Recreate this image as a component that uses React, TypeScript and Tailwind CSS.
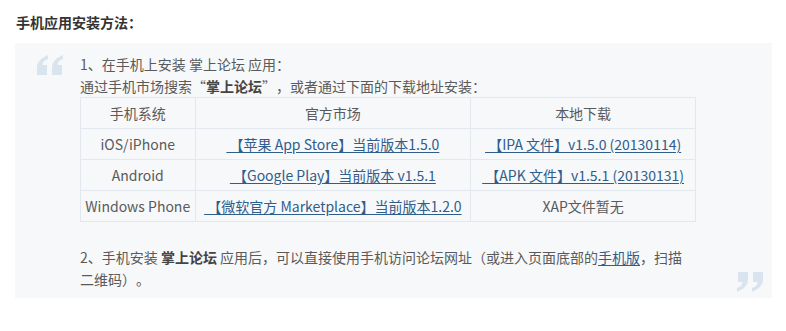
import React from "react";

const ROWS = [
  {
    os: "iOS/iPhone",
    market: " 【苹果 App Store】当前版本1.5.0",
    local: " 【IPA 文件】v1.5.0 (20130114)",
    localLink: true,
  },
  {
    os: "Android",
    market: " 【Google Play】当前版本 v1.5.1",
    local: " 【APK 文件】v1.5.1 (20130131)",
    localLink: true,
  },
  {
    os: "Windows Phone",
    market: " 【微软官方 Marketplace】当前版本1.2.0",
    local: "XAP文件暂无",
    localLink: false,
  },
];

function QuoteMark({ flip }: { flip?: boolean }) {
  const mark = "M11 0 C4 3 0 7 0 13 L0 20 L10 20 L10 10 L5.5 10 C5.5 7 7.5 5 11 4 Z";
  return (
    <svg
      width="26"
      height="20"
      viewBox="0 0 26 20"
      className={flip ? "rotate-180" : ""}
      aria-hidden
    >
      <path d={mark} fill="#dae4ee" />
      <path d={mark} fill="#dae4ee" transform="translate(15 0)" />
    </svg>
  );
}

export default function App() {
  const link = "text-[#2f5d8c] underline underline-offset-2 whitespace-pre";
  const cell = "border border-[#e3e8ee] h-[31px] text-center align-middle";

  return (
    <div
      className="w-[786px] h-[331px] bg-white text-[14px] text-[#5a5a5a] [text-spacing-trim:space-all]"
      style={{ fontFamily: '"Noto Sans CJK SC", "Noto Sans", sans-serif' }}
    >
      <div className="px-[16px] pt-[12px] h-[43px] text-[14px] font-bold text-[#333] leading-[20px]">
        手机应用安装方法：
      </div>

      <div className="relative ml-[15px] mr-[14px] h-[255px] bg-[#f7f8f9] pl-[65px] pr-[76px] pt-[10px] leading-[22px]">
        <div className="absolute left-[22px] top-[12px]">
          <QuoteMark />
        </div>
        <div className="absolute right-[9px] bottom-[6px]">
          <QuoteMark flip />
        </div>

        <p>1、在手机上安装 掌上论坛 应用：</p>
        <p>
          通过手机市场搜索“<b className="text-[#444]">掌上论坛</b>”，或者通过下面的下载地址安装：
        </p>

        <table className="w-[616px] border-collapse leading-[20px]">
          <colgroup>
            <col className="w-[115px]" />
            <col className="w-[276px]" />
            <col className="w-[225px]" />
          </colgroup>
          <thead>
            <tr>
              <td className={cell}>手机系统</td>
              <td className={cell}>官方市场</td>
              <td className={cell}>本地下载</td>
            </tr>
          </thead>
          <tbody>
            {ROWS.map((r) => (
              <tr key={r.os}>
                <td className={cell}>{r.os}</td>
                <td className={cell}>
                  <a className={link}>{r.market}</a>
                </td>
                <td className={cell}>
                  {r.localLink ? <a className={link}>{r.local}</a> : r.local}
                </td>
              </tr>
            ))}
          </tbody>
        </table>

        <p className="mt-[24px]">
          2、手机安装 <b className="text-[#444]">掌上论坛</b> 应用后，可以直接使用手机访问论坛网址（或进入页面底部的
          <a className="text-[#2f5d8c] underline underline-offset-2">手机版</a>
          ，扫描二维码）。
        </p>
      </div>
    </div>
  );
}
